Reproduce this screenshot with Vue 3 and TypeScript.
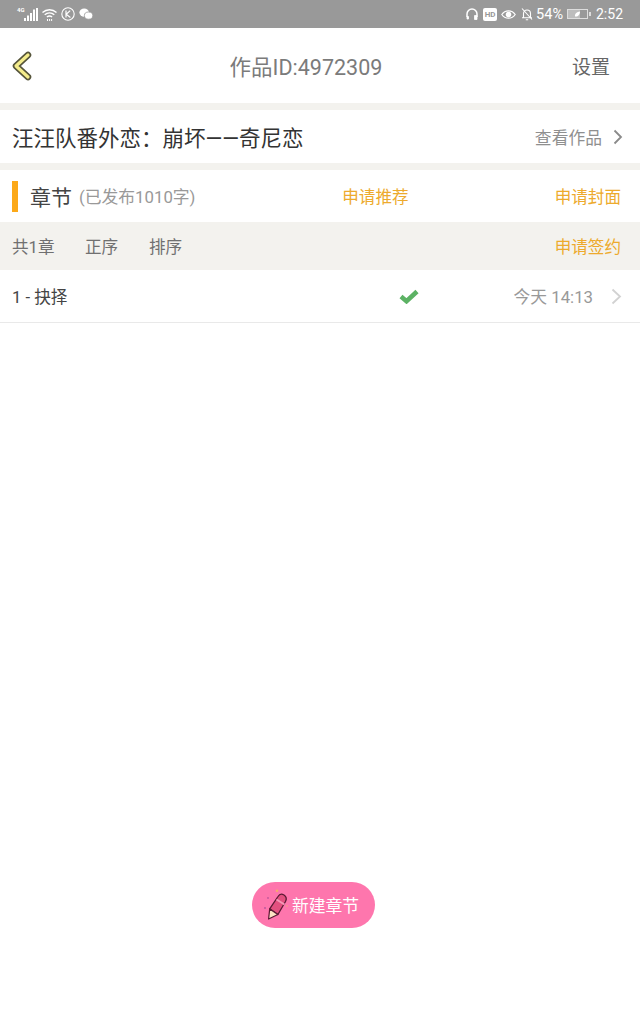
<script setup lang="ts">
const title: string = '汪汪队番外恋：崩坏——奇尼恋'
</script>

<template>
  <div class="page">
    <div class="status">
      <div class="status-left">
        <span class="net">4G</span>
        <svg class="signal" width="14" height="13" viewBox="0 0 14 13"><rect x="0" y="10" width="2" height="3" /><rect x="3" y="7.500" width="2" height="5.500" /><rect x="6" y="5" width="2" height="8" /><rect x="9" y="1.500" width="2" height="11.500" /><rect x="12" y="0" width="2" height="13" /></svg>
        <svg width="15" height="13" viewBox="0.500 0 15 13" fill="none" stroke="#fff" stroke-width="1.400"><path d="M1 4.500C5 .8 11 .8 15 4.500" /><path d="M3.200 6.800C6 4.400 10 4.400 12.800 6.800" /><path d="M5.400 9C6.900 7.800 9.100 7.800 10.600 9" /><path d="M5.500 12h1M7.600 12h1M9.600 12h1" stroke-width="1.800" /></svg>
        <svg width="14" height="14" viewBox="0 0 14 14" fill="none" stroke="#fff"><circle cx="7" cy="7" r="6.200" stroke-width="1.100" /><path d="M5 3.600v6.800M9.200 3.600 5.200 7.200l4.200 3.200" stroke-width="1.200" /></svg>
        <svg width="14" height="12" viewBox="0 0 14 12" fill="#fff"><ellipse cx="5.200" cy="4.600" rx="4.800" ry="4.200" /><ellipse cx="9.600" cy="7.600" rx="4.200" ry="3.600" stroke="#999" stroke-width=".8" /></svg>
      </div>
      <div class="status-right">
        <svg width="14" height="14" viewBox="0 0 14 14" fill="none" stroke="#fff" stroke-width="1.500"><path d="M2 10V7a5 5 0 0 1 10 0v3" /><path d="M9.500 8.500h2.500v4H9.500z" fill="#fff" stroke-width=".8" /><path d="M2 9.500h1.500v2.500H2z" fill="#fff" stroke-width=".8" /></svg>
        <span class="hd">HD</span>
        <svg width="15" height="11" viewBox="0 0 15 11" fill="none" stroke="#fff" stroke-width="1.200"><path d="M.8 5.500C4 .6 11 .6 14.200 5.500 11 10.400 4 10.400 .8 5.500Z" /><circle cx="7.500" cy="5.500" r="2.200" fill="#fff" /></svg>
        <svg width="14" height="14" viewBox="0 0 14 14" fill="none" stroke="#fff" stroke-width="1.100"><path d="M3.500 10.500V6.500a3.500 3.500 0 0 1 7 0v4M2 10.700h10M5.800 12.800h2.400M2 1.500l10 11" /></svg>
        <span class="pct">54%</span>
        <span class="battery">
          <svg width="19" height="8" viewBox="0 0 19 8"><rect width="12" height="8" fill="#bdbdbd" /><path d="M7 6.500C6.500 3.500 9 2 12 1.500 12 4.500 10 7 7 6.500Z" fill="#fff" /></svg>
        </span>
        <span class="time">2:52</span>
      </div>
    </div>

    <header class="header">
      <svg class="back" width="22" height="32" viewBox="0 0 22 32"><path d="M17 5 5 16l12 11" fill="none" stroke="#55543a" stroke-width="6.500" stroke-linecap="round" stroke-linejoin="round" /><path d="M17 5 5 16l12 11" fill="none" stroke="#f4ec8c" stroke-width="3.200" stroke-linecap="round" stroke-linejoin="round" /></svg>
      <div class="work-id">作品ID:4972309</div>
      <div class="settings">设置</div>
    </header>

    <section class="title-row">
      <div class="work-title">{{ title }}</div>
      <div class="view">查看作品</div>
      <svg class="chev dark" width="10" height="16" viewBox="0 0 10 16" fill="none"><path d="M1.500 1.500 8 8l-6.500 6.500" stroke-width="1.800" /></svg>
    </section>

    <section class="chapter-row">
      <span class="accent"></span>
      <span class="chapter-label">章节</span>
      <span class="published">(已发布1010字)</span>
      <span class="link recommend">申请推荐</span>
      <span class="link">申请封面</span>
    </section>

    <section class="toolbar">
      <span class="count">共1章</span>
      <span class="sort">正序</span>
      <span class="sort">排序</span>
      <span class="link push">申请签约</span>
    </section>

    <section class="item">
      <span class="item-name">1 - 抉择</span>
      <svg class="check" width="20" height="15" viewBox="0 0 20 15" fill="none"><path d="M2 7.500 7.500 12.200 18 2.500" stroke="#5cb264" stroke-width="4.600" /></svg>
      <span class="item-time">今天 14:13</span>
      <svg class="chev light" width="11" height="17" viewBox="0 0 11 17" fill="none"><path d="M1.500 1.500 9 8.500l-7.500 7" stroke-width="1.800" /></svg>
    </section>

    <div class="fab-wrap">
      <button class="fab" type="button">
        <svg class="pencil" width="24" height="32" viewBox="0 0 24 32">
          <circle cx="14" cy="1.800" r="1.300" fill="#f7a96c" />
          <circle cx="5" cy="9" r=".9" fill="#c2569a" />
          <circle cx="24" cy="17" r="1" fill="#f7938f" />
          <circle cx="2" cy="19" r=".9" fill="#b7559c" />
          <path d="M6.700 19.900 15 7.500C16.500 5 19 4.800 21 6c2.200 1.500 2.800 4 1.500 6.500L14.900 25.500Z" fill="#e2507f" stroke="#5a1a33" stroke-width="1.300" stroke-linejoin="round" />
          <path d="M6.700 19.900 14.900 25.500 5.600 30Z" fill="#fce3c4" stroke="#5a1a33" stroke-width="1.200" stroke-linejoin="round" />
          <path d="M13.500 10.500 21.500 15.500" stroke="#f49ab8" stroke-width="2" />
        </svg>
        <span>新建章节</span>
      </button>
    </div>
  </div>
</template>

<style>
html, body { margin: 0; background: #fff; }
</style>

<style scoped>
.page {
  width: 640px;
  height: 1024px;
  overflow: hidden;
  background: #fff;
  display: flex;
  flex-direction: column;
  font-family: "Roboto", "Noto Sans CJK SC", sans-serif;
}
.status {
  height: 28px;
  background: #999;
  display: flex;
  align-items: stretch;
  justify-content: space-between;
  padding: 0 17px;
  color: #fff;
  flex: none;
}
.status-left, .status-right { display: flex; align-items: center; gap: 4px; }
.net {
  font-size: 6px;
  line-height: 7px;
  font-weight: 700;
  align-self: flex-start;
  margin-top: 6px;
  margin-right: -4px;
  width: 7px;
}
.signal { fill: #fff; }
.hd {
  background: #fff;
  color: #999;
  font-size: 8px;
  font-weight: 700;
  width: 14px;
  height: 13px;
  line-height: 13px;
  text-align: center;
  border-radius: 2px;
}
.pct { font-size: 14.500px; margin-left: -2px; }
.battery {
  box-sizing: border-box;
  width: 21px;
  height: 10px;
  border: 1px solid #ddd;
  margin-right: 4px;
  position: relative;
  display: block;
}
.battery svg { display: block; }
.battery::after {
  content: "";
  position: absolute;
  right: -4px;
  top: 2px;
  width: 2px;
  height: 4px;
  background: #ddd;
}
.time { font-size: 14px; }
.header {
  height: 75px;
  flex: none;
  display: flex;
  align-items: center;
  border-bottom: 7px solid #f3f2ee;
  padding: 0 30px 0 11px;
}
.back { flex: none; }
.work-id {
  flex: 1;
  text-align: center;
  font-size: 21.500px;
  color: #7b7b7b;
  padding-left: 25px;
  padding-right: 18px;
}
.settings { font-size: 19px; color: #666; }
.title-row {
  height: 53px;
  flex: none;
  display: flex;
  align-items: center;
  padding: 0 17px 0 12px;
  border-bottom: 7px solid #f3f2ee;
}
.work-title { flex: 1; font-size: 21.500px; color: #333; white-space: nowrap; }
.view { font-size: 16.800px; color: #8f8f8f; margin-right: 11px; }
.chev { flex: none; }
.dark { stroke: #8a8a8a; }
.light { stroke: #d2d2d2; }
.chapter-row {
  height: 52px;
  flex: none;
  display: flex;
  align-items: center;
  padding: 0 19px 0 12px;
}
.accent { width: 6px; height: 31px; background: #fca919; margin-right: 12px; }
.chapter-label { font-size: 21px; color: #444; margin-right: 7px; }
.published { font-size: 16.800px; color: #999; flex: 1; }
.link { font-size: 16.600px; color: #edaa2d; }
.recommend { margin-right: 146px; }
.toolbar {
  height: 48px;
  flex: none;
  background: #f3f2ee;
  display: flex;
  align-items: center;
  padding: 0 19px 0 12px;
  font-size: 16.600px;
  color: #707070;
}
.count { width: 73px; }
.sort { width: 64px; }
.push { margin-left: auto; }
.item {
  height: 52px;
  flex: none;
  display: flex;
  align-items: center;
  padding: 0 18px 0 12px;
  border-bottom: 1px solid #e9e9e9;
}
.item-name { font-size: 16.600px; color: #444; width: 387px; }
.check { flex: none; }
.item-time { flex: 1; text-align: right; font-size: 16.800px; color: #999; margin-right: 18px; }
.fab-wrap {
  display: flex;
  justify-content: center;
  margin-top: 559px;
  padding-right: 13px;
}
.fab {
  width: 123px;
  height: 46px;
  border: none;
  border-radius: 23px;
  background: #fe76ad;
  color: #fff;
  font: inherit;
  font-size: 16.800px;
  display: flex;
  align-items: center;
  padding: 0 0 0 11px;
  gap: 5px;
}
.pencil { flex: none; overflow: visible; }
</style>
